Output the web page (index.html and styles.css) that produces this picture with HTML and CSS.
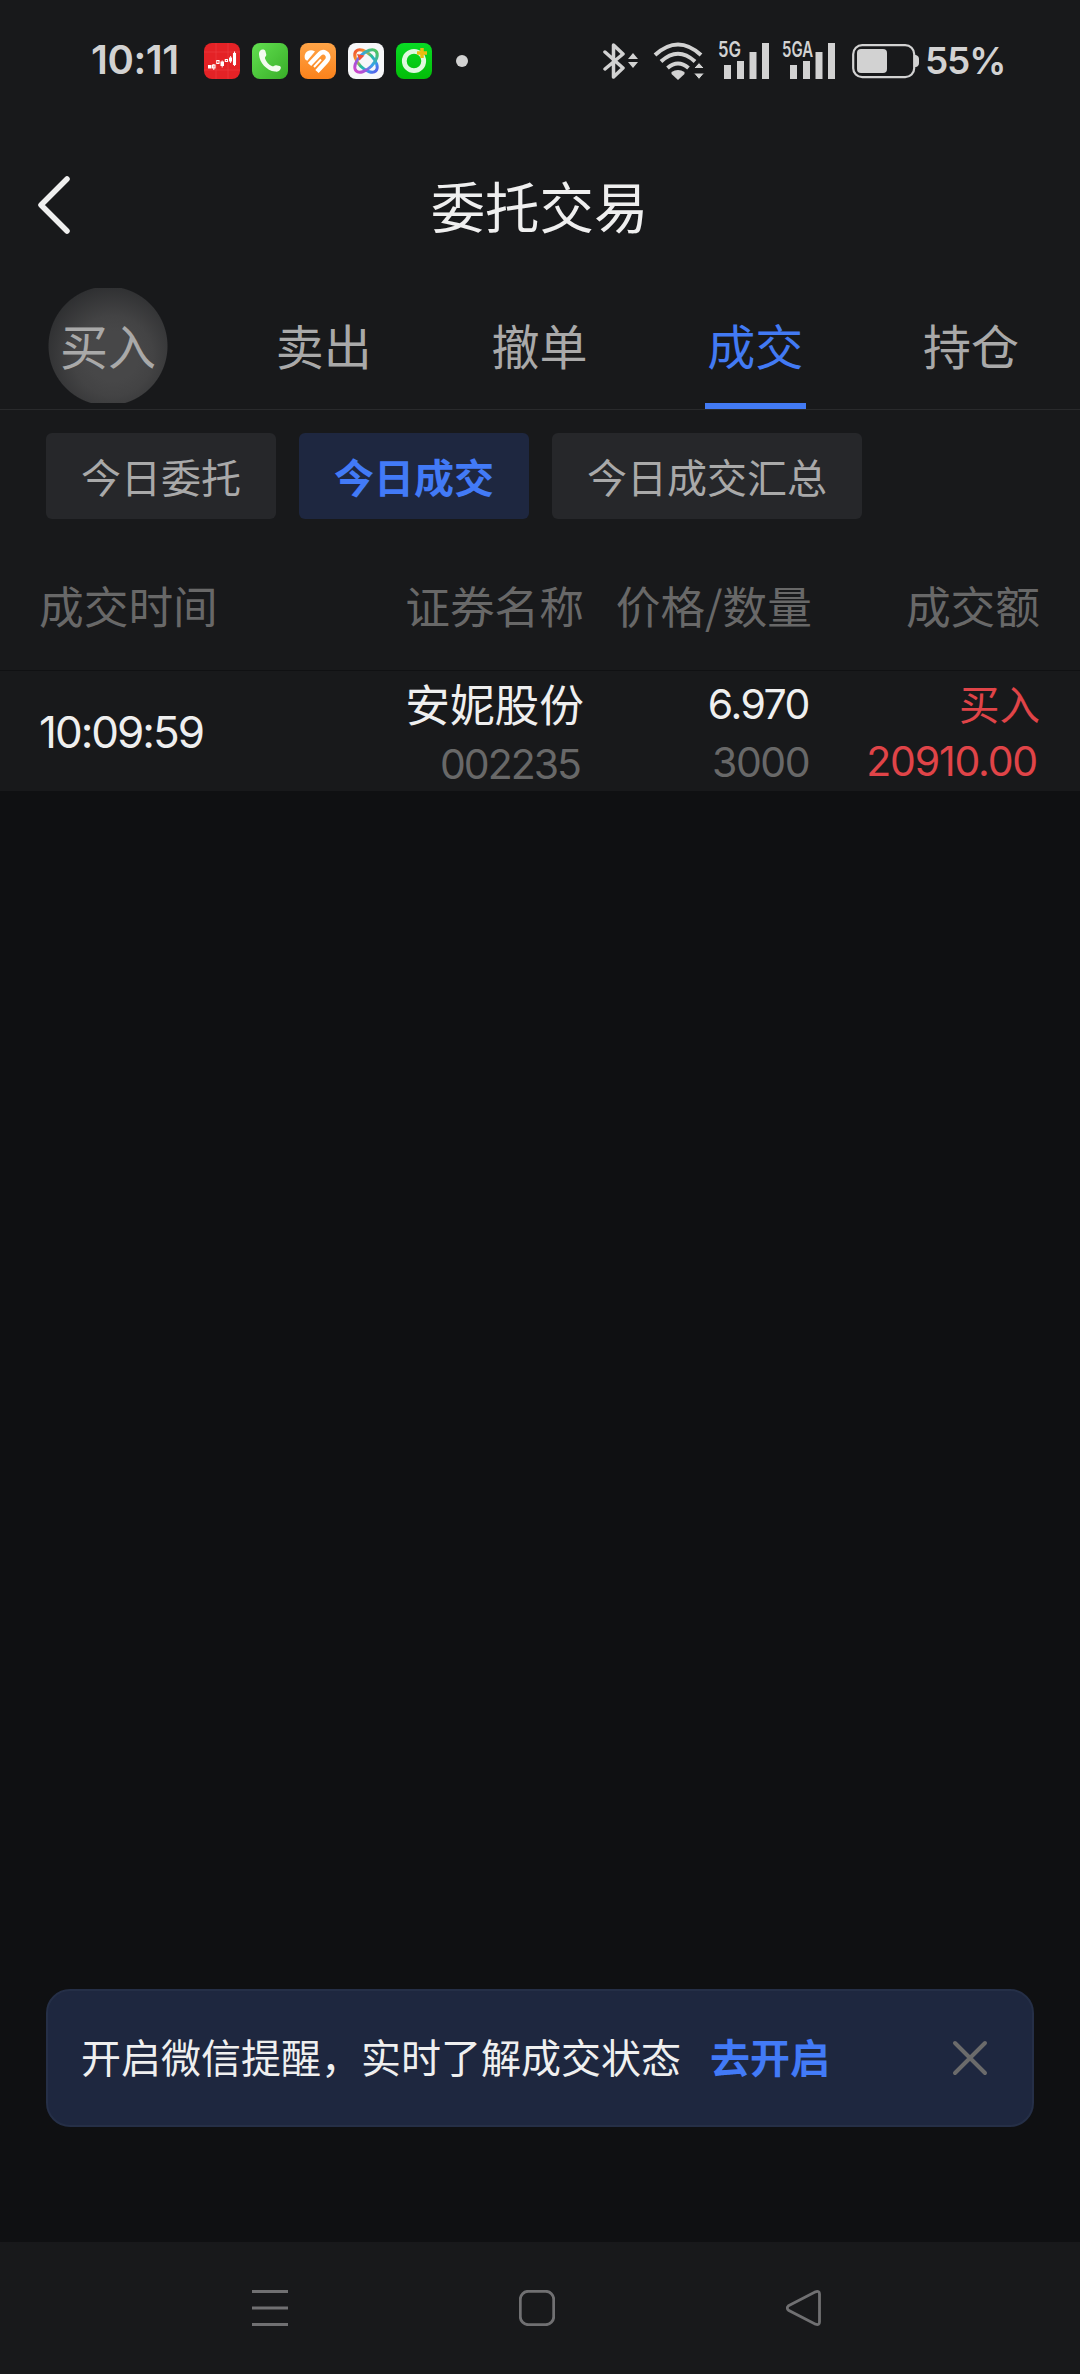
FILE: index.html
```html
<!DOCTYPE html>
<html lang="zh-CN">
<head>
<meta charset="utf-8">
<title>委托交易</title>
<link rel="stylesheet" href="styles.css">
</head>
<body>
<div class="screen">
  <div class="status">
    <span class="clock">10:11</span>
    <div class="apps">
      <svg class="app" viewBox="0 0 36 36"><rect width="36" height="36" rx="8" fill="#e42226"/><path d="M12 0v36M24 0v36M0 9h36M0 27h36" stroke="#ec4044" stroke-width=".6"/><g fill="#fff"><path d="M4 22h3.500v3.500h-3.500zM16.500 18.500h3.500v4.500h-3.500zM25 14.500h3v4h-3z"/><path d="M18.200 17.500v7M26.600 13v7M9.800 21v6" stroke="#fff" stroke-width=".9"/></g><g fill="none" stroke="#fff" stroke-width="1.100"><path d="M8.500 22h2.500v3h-2.500zM12.800 17.500h2.200v3h-2.200zM21.300 16.500h2.200v2h-2.200zM29.500 10.500h2v11h-2zM30.500 8.500v14.500"/></g></svg>
      <svg class="app" viewBox="0 0 36 36"><defs><linearGradient id="call" x2="1" y2="1"><stop stop-color="#62df50"/><stop offset="1" stop-color="#38ae28"/></linearGradient></defs><rect width="36" height="36" rx="8" fill="url(#call)"/><path d="M9 7c2-1 4-.5 4.500 1.500l.8 3c.4 1.600-1.800 2.300-1.300 3.900 1.400 3.600 3.800 6.200 7.200 7.800 1.500.7 2.300-1.300 4-.9l3.400.7c1.400.4 1.600 1.700.8 3.300-.8 1.800-2.700 2.700-5.400 2.300C14.500 27.600 7.500 19.500 7 11.500 6.800 9.300 7.600 7.700 9 7z" fill="#f2fbef"/></svg>
      <svg class="app" viewBox="0 0 36 36"><defs><linearGradient id="fit" y2="1" x2="0"><stop stop-color="#ffa447"/><stop offset="1" stop-color="#fb821b"/></linearGradient></defs><rect width="36" height="36" rx="8" fill="url(#fit)"/><path d="M5 16C3 10 9 5 15 8.500L7.300 17.800C6.200 17.300 5.400 16.800 5 16z" fill="#fff"/><path d="M9.500 21.500 19.500 11c4-4.500 9.500 0 8.500 4.500-.3 1.300-1 2-2 3.100L17 28.500" fill="none" stroke="#fff" stroke-width="4.600"/><path d="m14 24 7-7.500" stroke="#fff" stroke-width="2"/></svg>
      <svg class="app" viewBox="0 0 36 36"><defs><linearGradient id="orb" x2="0" y2="1"><stop stop-color="#f25b32"/><stop offset=".25" stop-color="#f7a829"/><stop offset=".5" stop-color="#27bd92"/><stop offset=".75" stop-color="#31a5ee"/><stop offset="1" stop-color="#5465e9"/></linearGradient><linearGradient id="orb2" x2="0" y2="1"><stop stop-color="#4bc463"/><stop offset=".45" stop-color="#35a2ec"/><stop offset=".75" stop-color="#9b55de"/><stop offset="1" stop-color="#cb48ca"/></linearGradient></defs><rect width="36" height="36" rx="8" fill="#f7f7f9"/><g fill="none" stroke-width="3"><ellipse cx="18" cy="18" rx="7.500" ry="14" transform="rotate(-45 18 18)" stroke="url(#orb)"/><ellipse cx="18" cy="18" rx="7.500" ry="14" transform="rotate(45 18 18)" stroke="url(#orb2)"/></g><path d="m9 11 7.500 1.500-5 5z" fill="#ee5137"/></svg>
      <svg class="app" viewBox="0 0 36 36"><defs><linearGradient id="ring" x2="0" y2="1"><stop stop-color="#08db24"/><stop offset="1" stop-color="#03bd08"/></linearGradient></defs><rect width="36" height="36" rx="8" fill="url(#ring)"/><circle cx="18" cy="18" r="9.700" fill="none" stroke="#dff9df" stroke-width="4.800"/><path d="M26 5v10M21 10h10" stroke="#e9bd10" stroke-width="3.500"/></svg>
      <i class="more-dot"></i>
    </div>
    <div class="signals">
      <svg class="bt" viewBox="0 0 36 38"><path d="m2 10 18 16-9.500 9V3l9.500 9L2 27" fill="none" stroke="#d2d2d2" stroke-width="3.500" stroke-linejoin="round" stroke-linecap="round"/><path d="m25 17 5-6 5 6zM25 20h10l-5 6z" fill="#d2d2d2"/></svg>
      <svg class="wifi" viewBox="0 0 52 38"><g fill="none" stroke="#d2d2d2" stroke-width="4"><path d="M2 13Q25-8 48 13"/><path d="M8 19.500q17-15.500 34 0"/><path d="M14.500 26q10.500-9 21 0"/></g><path d="m18.500 30q6.500-4 13 0v2l-6.500 6-6.500-6z" fill="#d2d2d2"/><path d="m40.500 26.500 5.500-6 5.500 6zM40.500 31h11L46 37.500z" fill="#d2d2d2" stroke="#17191b"/></svg>
      <svg class="cell" viewBox="0 0 52 38"><text x="0" y="15" textLength="23" lengthAdjust="spacingAndGlyphs">5G</text><path d="M6 23h7v14H6zM19 19h7v18h-7zM31.500 10h7v27h-7zM44 1h7v36h-7z"/></svg>
      <svg class="cell" viewBox="0 0 52 38"><text x="-2" y="15" textLength="31" lengthAdjust="spacingAndGlyphs">5GA</text><path d="M6 23h7v14H6zM19 19h7v18h-7zM31.500 10h7v27h-7zM44 1h7v36h-7z"/></svg>
      <svg class="battery" viewBox="0 0 68 38"><rect x="1.200" y="3.200" width="61" height="32" rx="9" fill="none" stroke="#d2d2d2" stroke-width="2.200"/><path d="M63 13h1q3 1 3 4v4q0 3-3 4h-1z" fill="#d2d2d2"/><rect x="5" y="7" width="30" height="24" rx="4" fill="#d2d2d2"/></svg>
      <span class="percent">55%</span>
    </div>
  </div>

  <header class="header">
    <svg class="back" viewBox="0 0 36 60"><path d="M31 4 5 30l26 26" fill="none" stroke="#efefef" stroke-width="5.500" stroke-linecap="round" stroke-linejoin="round"/></svg>
    <h1 class="title">委托交易</h1>
  </header>

  <nav class="tabs">
    <a class="tab pressed">买入</a>
    <a class="tab">卖出</a>
    <a class="tab">撤单</a>
    <a class="tab active">成交</a>
    <a class="tab">持仓</a>
  </nav>

  <div class="filters">
    <span class="chip">今日委托</span>
    <span class="chip selected">今日成交</span>
    <span class="chip">今日成交汇总</span>
  </div>

  <div class="row table-head">
    <span class="left">成交时间</span>
    <span>证券名称</span>
    <span>价格/数量</span>
    <span>成交额</span>
  </div>
  <div class="row trade">
    <div class="left time">10:09:59</div>
    <div class="cell-pair"><span class="name">安妮股份</span><span class="num code">002235</span></div>
    <div class="cell-pair"><span class="num price">6.970</span><span class="num qty">3000</span></div>
    <div class="cell-pair red"><span class="side">买入</span><span class="num amount">20910.00</span></div>
  </div>

  <main class="empty">
    <div class="banner">
      <span class="message">开启微信提醒，实时了解成交状态</span>
      <a class="enable">去开启</a>
      <svg class="close" viewBox="0 0 36 36"><path d="m3 3 30 30M33 3 3 33" stroke="#6b6b6b" stroke-width="4" stroke-linecap="round"/></svg>
    </div>
  </main>

  <footer class="sysnav">
    <svg viewBox="0 0 36 36"><path d="M0 1.500h36M0 18h36M0 34.500h36"/></svg>
    <svg viewBox="0 0 36 36"><rect x="1.300" y="1.300" width="33.400" height="33.400" rx="8"/></svg>
    <svg viewBox="0 0 36 36"><path d="M2.500 15.700 29.500 1.800Q33.500.5 33.500 4v28q0 3.500-4 2.200L2.500 20.300Q0 18 2.500 15.700z"/></svg>
  </footer>
</div>
</body>
</html>
```

FILE: styles.css
```css
* { box-sizing: border-box; }

body {
  margin: 0;
  background: #0f1012;
  font-family: "Noto Sans CJK SC", sans-serif;
  color: #efefef;
}

.screen {
  width: 1080px;
  height: 2374px;
  display: flex;
  flex-direction: column;
  background: #18191b;
}

svg { display: block; flex: none; }

/* status bar */
.status {
  height: 122px;
  padding: 0 74px 0 91px;
  display: flex;
  align-items: center;
  color: #d2d2d2;
  font-family: Inter, sans-serif;
  font-weight: 600;
  line-height: 1;
}
.clock { width: 113px; padding-bottom: 3px; font-size: 40px; letter-spacing: -0.4px; }
.apps { display: flex; align-items: center; gap: 12px; }
.app { width: 36px; height: 36px; }
.more-dot { width: 12px; height: 12px; margin-left: 12px; border-radius: 50%; background: #d2d2d2; }
.signals { display: flex; align-items: center; margin-left: auto; }
.bt { width: 36px; height: 38px; margin-right: 14px; }
.wifi { width: 52px; height: 38px; margin-right: 13px; }
.cell { width: 52px; height: 38px; margin-right: 14px; overflow: visible; fill: #d2d2d2; font-size: 21px; }
.battery { width: 68px; height: 38px; margin-right: 5px; margin-left: 2px; }
.percent { width: 81px; padding-bottom: 2px; font-size: 37px; letter-spacing: -1.2px; }

/* title bar */
.header {
  height: 166px;
  padding: 0 37px 1px 36px;
  display: grid;
  grid-template-columns: 36px 1fr 36px;
  align-items: center;
}
.back { width: 36px; height: 60px; }
.title { margin: 0; text-align: center; font-size: 54.400px; font-weight: 400; line-height: 80px; }

/* tabs */
.tabs {
  height: 122px;
  padding-right: 1px;
  display: grid;
  grid-template-columns: repeat(5, 1fr);
  justify-items: center;
  border-bottom: 1px solid #292a2c;
}
.tab {
  width: 120px;
  height: 121px;
  text-align: center;
  font-size: 48px;
  line-height: 113px;
  color: #a9a9a9;
}
.tab.pressed {
  height: 115px;
  background: radial-gradient(circle 60px at 60px 58px, transparent 59px, #18191b 60px), radial-gradient(circle at 65px 68px, #474748 25px, #434344 40px, #2b2c2e 76px);
}
.tab.active { width: 101px; color: #427af4; border-bottom: 6px solid #427af4; }

/* filter chips */
.filters { height: 136px; padding: 23px 46px 0; display: flex; align-items: flex-start; gap: 23px; }
.chip {
  height: 86px;
  padding: 0 35px;
  border-radius: 6px;
  background: #26272a;
  color: #a9a9a9;
  font-size: 40px;
  line-height: 86px;
}
.chip.selected { background: #1e2740; color: #427af7; font-weight: 700; }

/* trades table */
.row {
  padding: 0 40px 0 39px;
  display: grid;
  grid-template-columns: 280px 265px 228px 228px;
  text-align: right;
}
.left { text-align: left; }
.table-head {
  height: 125px;
  padding-bottom: 5px;
  align-items: center;
  border-bottom: 1px solid #101113;
  color: #686868;
  font-size: 44.700px;
  line-height: 1;
}
.trade { height: 120px; }
.time { font: 400 44px/122px Inter, sans-serif; letter-spacing: -2px; }
.cell-pair { display: flex; flex-direction: column; align-items: flex-end; }
.name { font-size: 44.700px; line-height: 64px; }
.num { padding-right: 3px; font-family: Inter, sans-serif; font-size: 41px; line-height: 53px; letter-spacing: -1.5px; }
.code, .qty { color: #686868; }
.code { padding-right: 4px; line-height: 58px; letter-spacing: -2px; }
.price { line-height: 66px; }
.qty { line-height: 50px; }
.side { font-size: 40.500px; line-height: 64px; }
.amount { line-height: 53px; letter-spacing: -1.2px; }
.red { color: #e04448; }

/* content area and reminder banner */
.empty {
  flex: 1;
  padding: 0 46px 115px;
  display: flex;
  align-items: flex-end;
  background: #0f1012;
}
.banner {
  width: 100%;
  height: 138px;
  padding: 0 44px 0 33px;
  display: flex;
  align-items: center;
  border: 2px solid #252f47;
  border-radius: 24px;
  background: #1e273f;
  font-size: 40px;
}
.message { width: 629px; padding-bottom: 4px; }
.enable { padding-bottom: 4px; color: #427af7; font-weight: 700; }
.close { width: 36px; height: 36px; margin-left: auto; }

/* system navigation */
.sysnav {
  height: 132px;
  padding: 0 258px 0 252px;
  display: flex;
  justify-content: space-between;
  align-items: center;
}
.sysnav svg { width: 36px; height: 36px; fill: none; stroke: #707072; stroke-width: 2.8; }
```
